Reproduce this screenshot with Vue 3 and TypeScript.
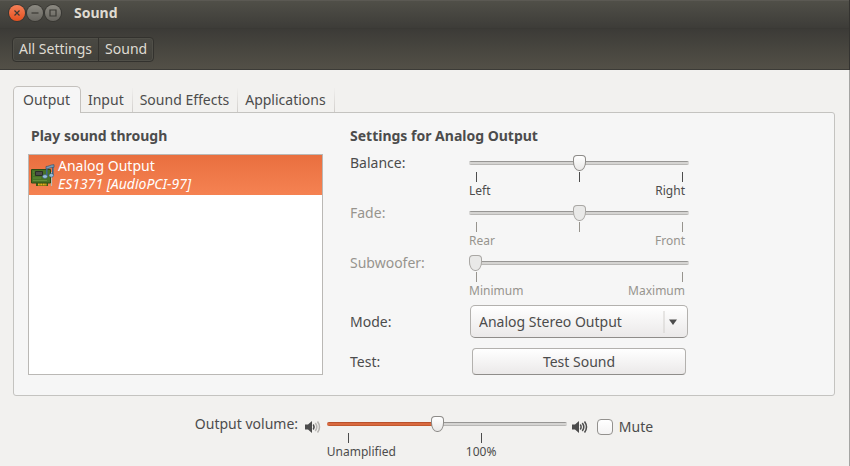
<script setup lang="ts">
import { computed, ref } from 'vue'

interface Balance {
  id: string
  label: string
  value: number
  low: string
  high: string
  ticks: number
  disabled: boolean
}

const tabs = ['Output', 'Input', 'Sound Effects', 'Applications']
const activeTab = ref('Output')

const channels = ref<Balance[]>([
  { id: 'balance', label: 'Balance:', value: 50, low: 'Left', high: 'Right', ticks: 3, disabled: false },
  { id: 'fade', label: 'Fade:', value: 50, low: 'Rear', high: 'Front', ticks: 3, disabled: true },
  { id: 'subwoofer', label: 'Subwoofer:', value: 0, low: 'Minimum', high: 'Maximum', ticks: 2, disabled: true },
])

const mode = ref('Analog Stereo Output')
const volume = ref(46)
const muted = ref(false)
const volumeStyle = computed(() => ({ '--fill': `${volume.value}%` }))
</script>

<template>
  <div class="window">
    <header>
      <div class="titlebar">
        <button class="wm close" type="button">
          <svg viewBox="0 0 16 16"><path d="M5.5 5.5l5 5M10.5 5.5l-5 5" /></svg>
        </button>
        <button class="wm" type="button">
          <svg viewBox="0 0 16 16"><path d="M4.5 8h7" /></svg>
        </button>
        <button class="wm" type="button">
          <svg viewBox="0 0 16 16"><path d="M5 5h6v6H5z" /></svg>
        </button>
        <h1>Sound</h1>
      </div>
      <nav class="toolbar">
        <div class="crumbs">
          <button type="button">All Settings</button>
          <button type="button">Sound</button>
        </div>
      </nav>
    </header>

    <main>
      <div class="tabs" role="tablist">
        <button
          v-for="tab in tabs"
          :key="tab"
          type="button"
          role="tab"
          class="tab"
          :class="{ active: tab === activeTab }"
          :aria-selected="tab === activeTab"
          @click="activeTab = tab"
        >{{ tab }}</button>
      </div>

      <div class="panel" role="tabpanel">
        <section class="devices">
          <h2>Play sound through</h2>
          <ul class="list">
            <li class="device">
              <svg class="card-icon" viewBox="0 0 24 24">
                <path d="M20.500 9v14" stroke="#b9bdb6" stroke-width="1.2" />
                <path d="M5 19h12v4H5z" fill="#3c5a18" />
                <path d="M7 20h8.500v2.500H7z" fill="#e3b51c" />
                <path d="M9 20v3M11.500 20v3M14 20v3" stroke="#8a6a0c" stroke-width=".7" />
                <path d="M.5 6.500h19v13.500H.5z" fill="#477226" stroke="#2d4b14" />
                <path d="M2 9h1.500M2 12h1.500M2 15h8M2 17.500h14" stroke="#6f9a43" stroke-width=".7" />
                <path d="M4.500 8.500h7v4h-7z" fill="#4b4d49" stroke="#292c27" />
                <path d="M15.800 4v9M21.800 3v9" stroke="#3d6689" stroke-width="1.600" />
                <path d="M15 3.500c3 0 4-1.800 8-1.800v2.600c-3.600 0-5 1.600-8 1.700z" fill="#789bb5" stroke="#34536e" stroke-width=".7" />
                <ellipse cx="14" cy="13.500" rx="2.500" ry="1.900" fill="#94bddb" stroke="#34536e" stroke-width=".6" />
                <ellipse cx="20.300" cy="12.300" rx="2.300" ry="1.900" fill="#94bddb" stroke="#34536e" stroke-width=".6" />
              </svg>
              <div>
                <div>Analog Output</div>
                <em>ES1371 [AudioPCI-97]</em>
              </div>
            </li>
          </ul>
        </section>

        <section class="settings">
          <h2>Settings for Analog Output</h2>
          <div class="form">
            <div v-for="c in channels" :key="c.id" class="row channel" :class="{ disabled: c.disabled }">
              <label :for="c.id">{{ c.label }}</label>
              <div class="scale">
                <input :id="c.id" v-model.number="c.value" class="slider" type="range" min="0" max="100" :disabled="c.disabled" />
                <div class="ticks"><i v-for="n in c.ticks" :key="n"></i></div>
                <div class="ends"><span>{{ c.low }}</span><span>{{ c.high }}</span></div>
              </div>
            </div>
            <div class="row mode">
              <label for="mode">Mode:</label>
              <div class="combo">
                <select id="mode" v-model="mode">
                  <option>Analog Stereo Output</option>
                </select>
                <svg class="arrow" viewBox="0 0 24 24">
                  <path d="M.5 1v22" stroke="#d2d0cd" />
                  <path d="M5.500 9.500h8L9.500 15z" fill="#4c4c4c" />
                </svg>
              </div>
            </div>
            <div class="row test">
              <label for="test">Test:</label>
              <button id="test" class="push" type="button">Test Sound</button>
            </div>
          </div>
        </section>
      </div>

      <footer>
        <label class="volume-label" for="volume">Output volume:</label>
        <svg class="speaker" viewBox="0 0 16 16">
          <path d="M0 5.500h3L7 2v12L3 10.500H0z" fill="#4c4c4c" />
          <path d="M8.300 5.500q1.600 2.500 0 5" class="wave" />
          <path d="M10.300 4q3 4 0 8M12.500 2.500q4 5.500 0 11" class="wave faint" />
        </svg>
        <div class="volume-scale">
          <input id="volume" v-model.number="volume" class="slider filled" type="range" min="0" max="100" :style="volumeStyle" />
          <div class="volume-ticks"><i></i><i></i></div>
          <div class="volume-marks"><span>Unamplified</span><span>100%</span></div>
        </div>
        <svg class="speaker loud" viewBox="0 0 16 16">
          <path d="M0 5.500h3L7 2v12L3 10.500H0z" fill="#4c4c4c" />
          <path d="M8.300 5.500q1.600 2.500 0 5M10.300 4q3 4 0 8M12.500 2.500q4 5.500 0 11" class="wave" />
        </svg>
        <label class="mute"><input v-model="muted" type="checkbox" /><span>Mute</span></label>
      </footer>
    </main>
  </div>
</template>

<style>
body {
  margin: 0;
  background: #f2f1ef;
}
</style>

<style scoped>
* {
  box-sizing: border-box;
}

.window {
  display: flex;
  flex-direction: column;
  min-height: 100vh;
  border-right: 1px solid #a5a5a3;
  background: #f2f1ef;
  color: #4c4c4c;
  font-family: "Noto Sans", "Open Sans", sans-serif;
  font-size: 14px;
  line-height: 18px;
}

button,
select,
input {
  margin: 0;
  color: inherit;
  font: inherit;
}

h1,
h2 {
  margin: 0;
  font-size: 14px;
  line-height: 18px;
}

header {
  margin-right: -1px;
  border-right: 1px solid #343330;
  color: #dfdbd2;
}

.titlebar {
  display: flex;
  align-items: center;
  gap: 2px;
  height: 28px;
  padding: 0 9px 3px;
  border-top: 1px solid #5b5953;
  background: linear-gradient(#504f48, #3d3c38);
}

.titlebar h1 {
  padding-left: 11px;
}

.wm {
  width: 16px;
  height: 16px;
  padding: 0;
  border: 0;
  border-radius: 50%;
  background: linear-gradient(#8c8a82, #66645e);
  box-shadow: 0 0 0 1px #373632;
}

.wm.close {
  background: linear-gradient(#f68058, #e3501f);
}

.wm svg {
  display: block;
  fill: none;
  stroke: #3b3a35;
  stroke-width: 1.2;
}

.toolbar {
  display: flex;
  align-items: center;
  height: 42px;
  padding: 0 12px;
  border-top: 1px solid #3a3935;
  border-bottom: 1px solid #3c3b37;
  background: linear-gradient(#3c3b37, #535047);
}

.crumbs {
  display: flex;
  border: 1px solid #33322e;
  border-radius: 4px;
  background: linear-gradient(#4a4943, #42413b);
  box-shadow: inset 0 0 0 1px #504f48;
}

.crumbs button {
  height: 23px;
  padding: 0 6px;
  border: 0;
  background: none;
}

.crumbs button + button {
  border-left: 1px solid #33322e;
}

main {
  padding: 16px 14px 0 13px;
}

.tabs {
  display: flex;
  align-items: flex-end;
}

.tab {
  height: 24px;
  padding: 0 8px 0 7px;
  border: 0;
  border-right: 1px solid;
  border-image: linear-gradient(#f2f1ef, #d0cdca) 1;
  background: none;
}

.tab.active {
  z-index: 1;
  height: 27px;
  margin-bottom: -1px;
  padding: 0 10px 0 9px;
  border: 1px solid #c4c1bd;
  border-bottom: 0;
  border-image: none;
  border-radius: 5px 5px 0 0;
  background: #f6f6f6;
}

.panel {
  display: flex;
  gap: 27px;
  padding: 14px 14px 20px;
  border: 1px solid #c4c3c0;
  border-radius: 0 3px 3px 3px;
  background: #f6f6f6;
}

.devices {
  display: flex;
  flex-direction: column;
  flex: 0 0 295px;
}

.devices h2 {
  padding-left: 3px;
}

.list {
  flex: 1;
  margin: 9px 0 0;
  padding: 0;
  border: 1px solid #bab8b5;
  background: #fff;
  list-style: none;
}

.device {
  display: flex;
  align-items: center;
  gap: 3px;
  height: 40px;
  padding-left: 2px;
  background: linear-gradient(#e96f3f, #f58252);
  color: #fff;
  line-height: 18px;
}

.device em {
  display: block;
}

.card-icon {
  width: 24px;
  height: 24px;
  fill: none;
}

.settings {
  flex: 1;
}

.form {
  padding-top: 9px;
}

.row {
  display: flex;
}

.row > label {
  flex: 0 0 119px;
}

.channel {
  height: 50px;
}

.disabled {
  color: #97948e;
}

.scale {
  width: 220px;
}

.slider {
  display: block;
  width: 100%;
  height: 18px;
  appearance: none;
  background: transparent;
}

.slider::-webkit-slider-runnable-track {
  height: 4px;
  border-radius: 2px;
  background: linear-gradient(#979694 1px, #d5d4d2 1px 3px, #b9b8b6 3px);
}

.slider.filled::-webkit-slider-runnable-track {
  background:
    linear-gradient(#b9512c 1px, #d9693f 1px 3px, #c2592f 3px) 0 0 / var(--fill) 100% no-repeat,
    linear-gradient(#979694 1px, #d5d4d2 1px 3px, #b9b8b6 3px);
}

.slider::-webkit-slider-thumb {
  width: 13px;
  height: 16px;
  margin-top: -6px;
  border: 1px solid #8d8b88;
  border-radius: 4px 4px 6px 6px / 4px 4px 9px 9px;
  appearance: none;
  background: linear-gradient(#fff, #e9e8e7);
}

.slider:disabled::-webkit-slider-thumb {
  border-color: #a9a7a4;
  background: #e9e9e8;
}

.ticks {
  display: flex;
  justify-content: space-between;
  padding: 0 6px 0 7px;
}

i {
  width: 1px;
  height: 10px;
  background: currentColor;
}

.ends {
  display: flex;
  justify-content: space-between;
  padding-right: 4px;
  font-size: 12px;
  line-height: 18px;
}

.mode {
  align-items: center;
  margin-top: 1px;
}

.combo {
  display: grid;
  width: 218px;
  margin-left: 1px;
}

.combo select {
  grid-area: 1 / 1;
  width: 100%;
  height: 33px;
  padding: 0 28px 0 8px;
  border: 1px solid #b3b1ae;
  border-bottom-color: #8f8d8a;
  border-radius: 5px;
  appearance: none;
  background: linear-gradient(#fff, #ebe9e9);
}

.arrow {
  grid-area: 1 / 1;
  place-self: center end;
  width: 25px;
  height: 24px;
  pointer-events: none;
}

.test {
  align-items: center;
  margin-top: 10px;
}

.push {
  width: 214px;
  height: 27px;
  margin-left: 3px;
  padding: 0;
  border: 1px solid #b3b1ae;
  border-bottom-color: #8f8d8a;
  border-radius: 4px;
  background: linear-gradient(#fff, #ebe9e9);
}

footer {
  display: flex;
  justify-content: center;
  padding-top: 19px;
}

.volume-label {
  flex: 0 0 104px;
  white-space: nowrap;
}

.speaker {
  flex: none;
  width: 16px;
  height: 16px;
  margin: 4px 6px 0;
}

.speaker.loud {
  margin: 4px 9px 0 5px;
}

.wave {
  fill: none;
  stroke: #4c4c4c;
  stroke-width: 1.5;
}

.faint {
  stroke: #b5b3b0;
}

.volume-scale {
  flex: 0 0 240px;
}

.volume-ticks {
  display: flex;
  gap: 132px;
  padding-left: 21px;
}

.volume-marks {
  display: grid;
  grid-template-columns: 139px 1fr;
  font-size: 12px;
  line-height: 18px;
}

.mute {
  display: flex;
  align-items: center;
  gap: 6px;
  height: 24px;
}

.mute input {
  width: 16px;
  height: 16px;
  border: 1px solid #93918e;
  border-radius: 4px;
  appearance: none;
  background: linear-gradient(#fff, #f4f3f3);
}

.mute input:checked {
  background: #4c4c4c;
}
</style>
